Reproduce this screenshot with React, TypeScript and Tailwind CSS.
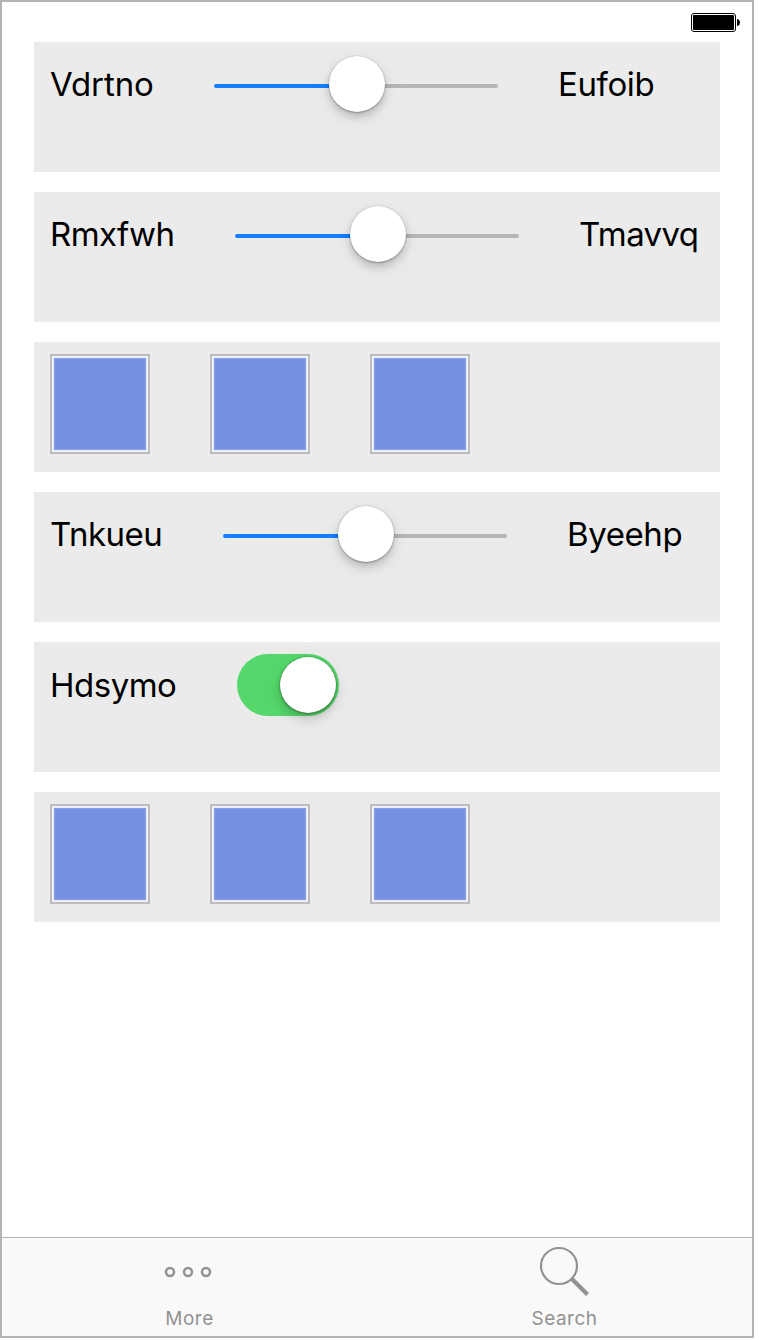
import type { ReactNode } from "react";

function Row({ children }: { children: ReactNode }) {
  return (
    <div className="flex h-[130px] items-start gap-[60px] bg-[#ebebeb] pt-3 pl-4">{children}</div>
  );
}

function Label({ text, className }: { text: string; className: string }) {
  return (
    <span className={`h-[60px] shrink-0 whitespace-nowrap text-[33px] ${className}`}>
      {text}
    </span>
  );
}

function Slider() {
  return (
    <div className="flex h-[60px] w-[284px] shrink-0 items-start">
      <div className="mt-[30px] h-1 w-[115px] rounded-l-full bg-[#157efb]" />
      <div className="z-10 mt-[2px] size-14 rounded-full bg-white shadow-[0_0_1px_rgba(0,0,0,0.3),0_1px_2px_rgba(0,0,0,0.25),0_5px_8px_rgba(0,0,0,0.18),0_6px_24px_rgba(0,0,0,0.06)]" />
      <div className="mt-[30px] h-1 w-[113px] rounded-r-full bg-[#b6b6b6]" />
    </div>
  );
}

function Toggle() {
  return (
    <div className="flex h-[62px] w-[102px] items-start justify-end rounded-full bg-[#55d86b] pt-[3px] pr-[3px]">
      <div className="size-14 rounded-full bg-white shadow-[0_0_2px_rgba(0,0,0,0.35),0_1px_2px_rgba(0,0,0,0.25),0_5px_8px_rgba(0,0,0,0.16),0_6px_24px_rgba(0,0,0,0.08)]" />
    </div>
  );
}

function Swatch() {
  return (
    <div className="size-[100px] border-2 border-[#bbbcbb] bg-[#eff1f4] p-px">
      <div className="size-full border border-[#e9edfb] bg-[#7690e3] shadow-[inset_0_0_0_1px_#899de6]" />
    </div>
  );
}

function Swatches() {
  return (
    <Row>
      <Swatch />
      <Swatch />
      <Swatch />
    </Row>
  );
}

export default function App() {
  return (
    <div className="h-[1340px] w-[760px] bg-white font-['Inter',sans-serif] text-black">
      <div className="flex h-[1338px] w-[754px] flex-col border-2 border-[#b3b3b3] bg-white">
        <div className="flex h-10 shrink-0 justify-end pt-[11px] pr-3">
          <svg width="49" height="19" viewBox="0 0 49 19">
            <rect x="0.5" y="0.5" width="44" height="18" rx="2.5" fill="white" stroke="black" />
            <rect x="2" y="2" width="41" height="15" rx="1" fill="black" />
            <path d="M46 6h.7Q49 6.8 49 9.5T46.7 13H46Z" fill="black" />
          </svg>
        </div>
        <main className="flex grow flex-col gap-5 pr-8 pl-8">
          <Row>
            <Label text="Vdrtno" className="w-[104px] leading-[60px] tracking-[-0.1px]" />
            <Slider />
            <Label text="Eufoib" className="w-[98px] leading-[60px] tracking-[-0.4px]" />
          </Row>
          <Row>
            <Label text="Rmxfwh" className="w-[125px] leading-[60px] tracking-[-0.6px]" />
            <Slider />
            <Label text="Tmavvq" className="w-[120px] leading-[60px] tracking-[-0.6px]" />
          </Row>
          <Swatches />
          <Row>
            <Label text="Tnkueu" className="w-[113px] leading-[60px] tracking-[-0.5px]" />
            <Slider />
            <Label text="Byeehp" className="w-[116px] leading-[60px] tracking-[-0.4px]" />
          </Row>
          <Row>
            <Label text="Hdsymo" className="w-[127px] leading-[62px] tracking-[-0.5px]" />
            <Toggle />
          </Row>
          <Swatches />
        </main>
        <nav className="grid h-[99px] shrink-0 grid-cols-2 border-t border-[#b3b3b3] bg-[#f9f9f9] text-[19px] leading-6 tracking-[0.5px] text-[#929292]">
          <div className="flex flex-col items-center">
            <svg className="mt-[28px] mr-1 mb-[29px]" width="48" height="12" viewBox="0 0 48 12" fill="none" stroke="#929292" strokeWidth="2.5">
              <circle cx="6" cy="6" r="4" />
              <circle cx="24" cy="6" r="4" />
              <circle cx="42" cy="6" r="4" />
            </svg>
            <span>More</span>
          </div>
          <div className="flex flex-col items-center">
            <svg className="mt-[8px] mr-[1px] mb-[9px]" width="52" height="52" viewBox="0 0 52 52" fill="none" stroke="#929292">
              <circle cx="21" cy="20" r="18" strokeWidth="2.2" />
              <path d="M33.5 32.5L49.5 48.5" strokeWidth="4.2" />
            </svg>
            <span>Search</span>
          </div>
        </nav>
      </div>
    </div>
  );
}
